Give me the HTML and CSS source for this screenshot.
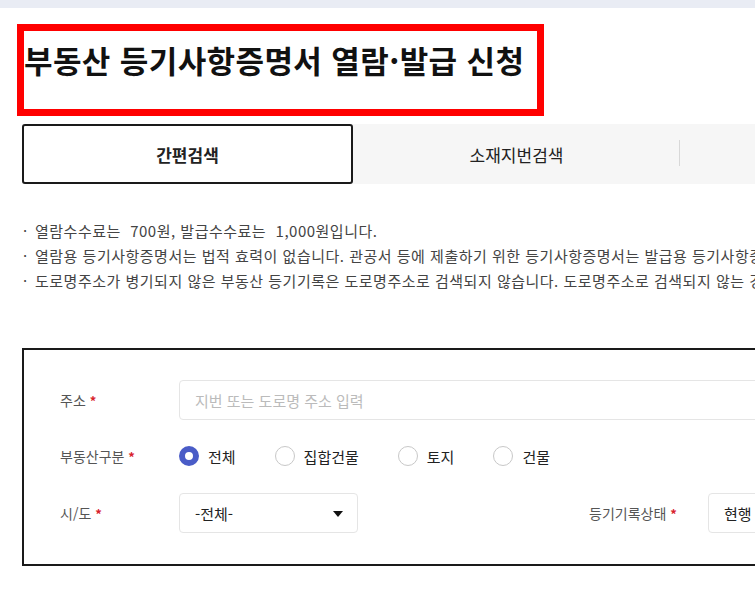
FILE: index.html
```html
<!DOCTYPE html>
<html lang="ko">
<head>
  <meta charset="UTF-8">
  <meta name="viewport" content="width=device-width, initial-scale=1.0">
  <title>부동산 등기사항증명서 열람·발급 신청</title>
  <link rel="stylesheet" href="styles.css">
</head>
<body>
  <div class="top-strip"></div>
  <div class="page">
    <div class="title-box">
      <h1>부동산 등기사항증명서 열람·발급 신청</h1>
    </div>

    <ul class="tabs">
      <li class="tab active">간편검색</li>
      <li class="tab">소재지번검색</li>
      <li class="tab">도로명주소검색</li>
      <li class="tab">고유번호검색</li>
    </ul>

    <ul class="notes">
      <li>열람수수료는&nbsp; 700원, 발급수수료는&nbsp; 1,000원입니다.</li>
      <li>열람용 등기사항증명서는 법적 효력이 없습니다. 관공서 등에 제출하기 위한 등기사항증명서는 발급용 등기사항증명서를 신청하시기 바랍니다.</li>
      <li>도로명주소가 병기되지 않은 부동산 등기기록은 도로명주소로 검색되지 않습니다. 도로명주소로 검색되지 않는 경우 지번주소로 검색하시기 바랍니다.</li>
    </ul>

    <div class="search-form">
      <div class="form-row">
        <label class="form-label" for="addr">주소 <span class="req">*</span></label>
        <input class="text-input" id="addr" type="text" placeholder="지번 또는 도로명 주소 입력">
      </div>
      <div class="form-row">
        <span class="form-label">부동산구분 <span class="req">*</span></span>
        <div class="radio-group">
          <label class="radio checked"><span class="dot"></span>전체</label>
          <label class="radio"><span class="dot"></span>집합건물</label>
          <label class="radio"><span class="dot"></span>토지</label>
          <label class="radio"><span class="dot"></span>건물</label>
        </div>
      </div>
      <div class="form-row split">
        <div class="field">
          <span class="form-label">시/도 <span class="req">*</span></span>
          <div class="select small">-전체-<span class="caret"></span></div>
        </div>
        <div class="field">
          <span class="form-label">등기기록상태 <span class="req">*</span></span>
          <div class="select">현행<span class="caret"></span></div>
        </div>
      </div>
    </div>
  </div>
</body>
</html>
```

FILE: styles.css
```css
body {  margin: 0;  padding: 0;  background-color: #fff;  overflow: hidden;
  font-family: "Noto Sans CJK KR", "Noto Sans", sans-serif;  color: #222;  }
.top-strip {  height: 8px;  background-color: #e9ecf4;  }
.page {  width: 1300px;  padding: 16px 0 0 22px;  }

.title-box {
  width: 513px;  margin-left: -5px;  border: 7px solid #ff0000;
  padding: 9px 0 29px 0;
}
.title-box h1 {
  margin: 0;  font-size: 31px;  line-height: 40px;  font-weight: 700;
  color: #111;  letter-spacing: 0.4px;
}

.tabs {
  display: grid;  grid-template-columns: 331px 327px 327px 327px;
  list-style: none;  margin: 8px 0 0 0;  padding: 0;  background-color: #f6f6f6;
}
.tab {
  position: relative;  height: 60px;  display: flex;  align-items: center;  justify-content: center;
  font-size: 17px;  color: #222;
}
.tab::after {
  content: "";  position: absolute;  right: 0;  top: 16px;  width: 1px;  height: 26px;
  background-color: #d8d8d8;
}
.tab.active {
  box-sizing: border-box;  background-color: #fff;  border: 2px solid #1a1a1a;
  border-radius: 3px;  font-weight: 700;
}
.tab.active::after,  .tab:nth-child(1)::after {  display: none;  }

.notes {
  list-style: none;  margin: 34px 0 0 0;  padding: 0;
  font-size: 15px;  line-height: 25px;  color: #444;  white-space: nowrap;  letter-spacing: 0.5px;
}
.notes li::before {  content: "·";  display: inline-block;  width: 12px;  padding-left: 1px;  }

.search-form {
  margin-top: 55px;  border: 2px solid #1a1a1a;  padding: 30px 36px 31px 36px;
  display: flex;  flex-direction: column;  gap: 16px;
}
.form-row {  display: flex;  align-items: center;  height: 40px;  }
.form-row.split {  margin-top: 1px;  }
.field {  display: flex;  align-items: center;  }
.field:first-child {  width: 529px;  }
.form-label {  width: 119px;  flex-shrink: 0;  font-size: 14px;  color: #555;  }
.req {  color: #d8232c;  font-size: 13px;  font-weight: 700;  }

.text-input {
  box-sizing: border-box;  width: 1000px;  height: 40px;  padding: 0 15px;
  border: 1px solid #e5e5e5;  border-radius: 4px;  font-family: inherit;  font-size: 15px;  color: #222;
}
.text-input::placeholder {  color: #bbb;  }

.radio-group {  display: flex;  align-items: center;  }
.radio {
  display: flex;  align-items: center;  gap: 9px;  margin-right: 39px;
  font-size: 15px;  color: #222;
}
.radio .dot {
  box-sizing: border-box;  width: 20px;  height: 20px;  border-radius: 50%;
  border: 1px solid #c8c8c8;  background-color: #fff;
}
.radio.checked .dot {  border: 6px solid #4a5cc7;  }

.select {
  box-sizing: border-box;  position: relative;  width: 300px;  height: 40px;
  padding: 0 15px;  display: flex;  align-items: center;
  border: 1px solid #e5e5e5;  border-radius: 4px;  font-size: 15px;  color: #222;
}
.select.small {  width: 179px;  }
.caret {
  position: absolute;  right: 14px;  top: 17px;  width: 0;  height: 0;
  border-left: 5px solid transparent;  border-right: 5px solid transparent;  border-top: 6px solid #111;
}
```
